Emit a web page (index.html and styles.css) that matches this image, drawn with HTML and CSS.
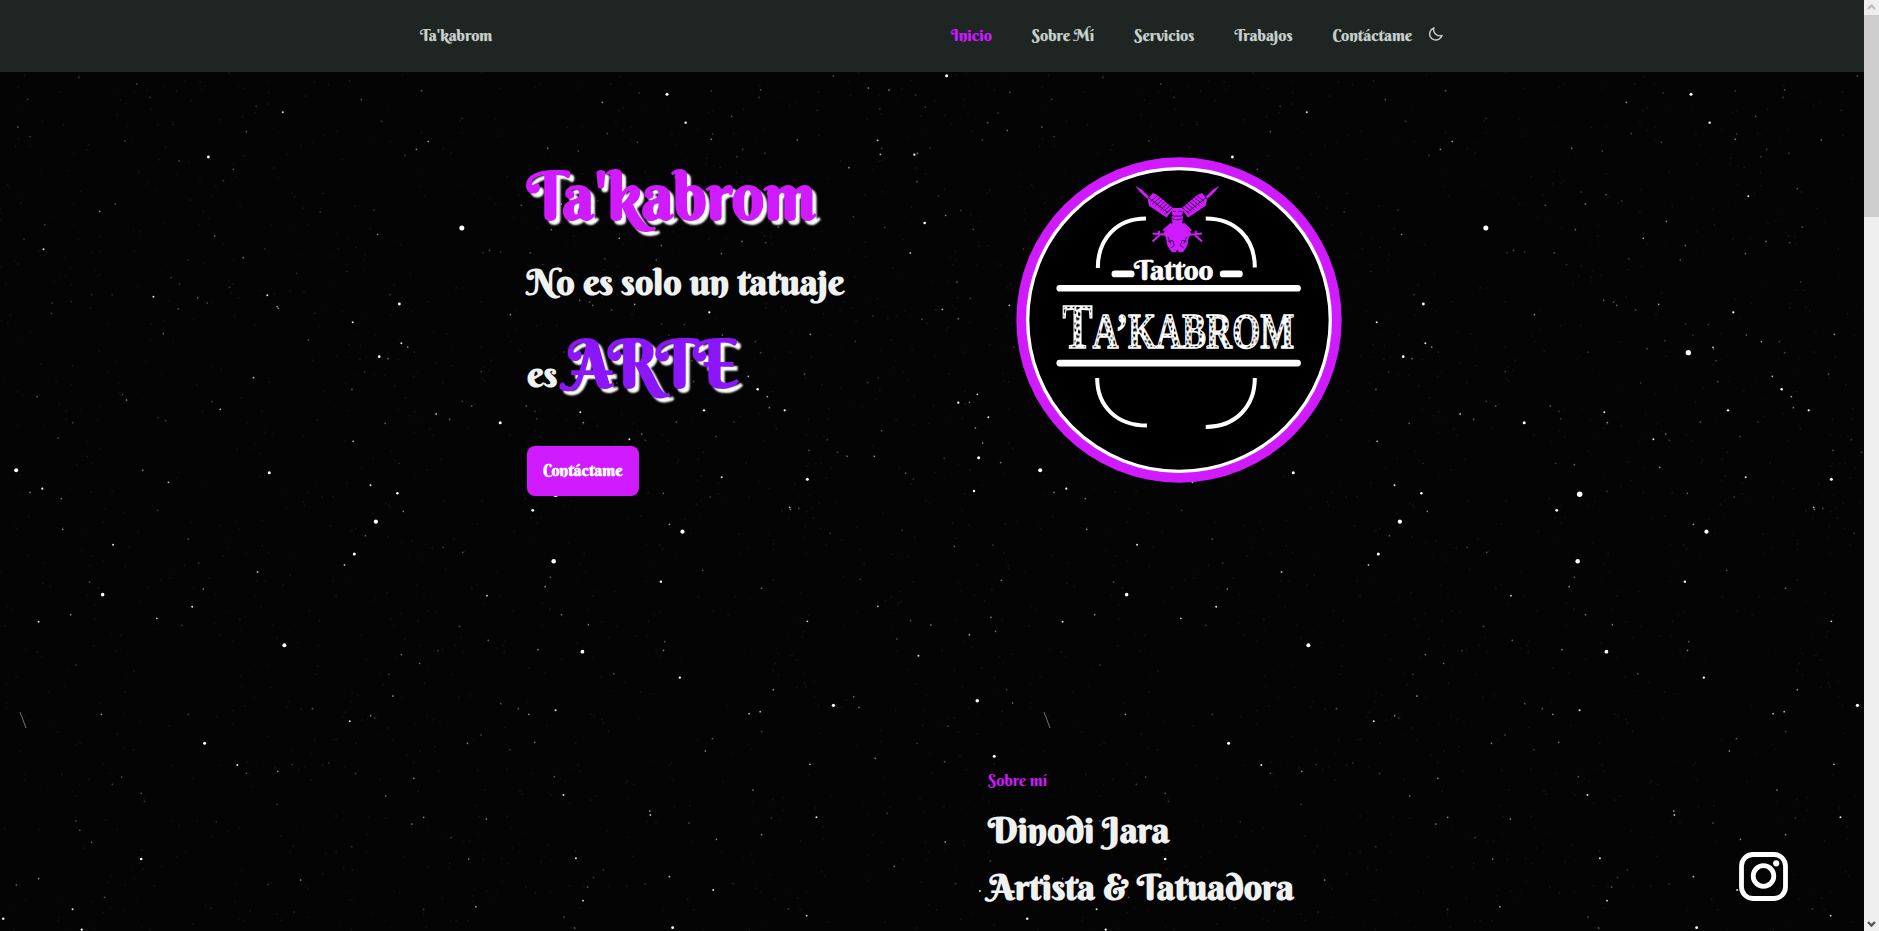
FILE: index.html
```html
<!DOCTYPE html>
<html lang="es">
<head>
<meta charset="utf-8">
<title>Ta'kabrom</title>
<link rel="stylesheet" href="styles.css">
</head>
<body>
<div class="page">
  <svg class="sky" width="1864" height="931" aria-hidden="true">
    <defs><pattern id="stars" width="1024" height="931" patternUnits="userSpaceOnUse"></pattern></defs>
    <rect width="1864" height="931" fill="url(#stars)"/>
  </svg>
  <header class="header">
    <a class="brand">Ta'kabrom</a>
    <nav class="nav">
      <a class="nav-item active">Inicio</a>
      <a class="nav-item">Sobre Mí</a>
      <a class="nav-item">Servicios</a>
      <a class="nav-item">Trabajos</a>
      <a class="nav-item">Contáctame</a>
    </nav>
    <svg class="moon" viewBox="0 0 14 14"><path d="M5 .8C3.3 4.8 7.4 10.2 13.1 8.5C11.8 12 8.1 13.9 4.7 12.7C1.3 11.5-.2 7.9 1.2 4.5C1.9 2.7 3.3 1.4 5 .8Z"/></svg>
  </header>
  <main>
    <section class="hero">
      <div class="hero-text">
        <h1 class="title">Ta'kabrom</h1>
        <p class="subtitle">No es solo un tatuaje</p>
        <p class="art-line"><span class="es">es</span><span class="art">ARTE</span></p>
        <a class="button">Contáctame</a>
      </div>
      <svg class="logo" viewBox="47 37 976 976">
        <defs>
          <pattern id="ink" width="61" height="53" patternUnits="userSpaceOnUse">
            <rect width="61" height="53" fill="#fff"/>
            <path d="M2 4l7-2 2 5-4 6-5-4zM17 1l4 4 5-1-1 8-4 2-6-6zM7 17l7-2 2 5-3 9-6-3zM23 18l5 1-2 7-4-1zM3 32l5 2 1 6-6 1zM15 35l7-3 4 4-4 8-5-2zM33 3l9-1 1 4-5 5 1 5-5-3zM48 6l7 3-2 6-4-1-3 5-2-8zM32 22l7-3 6 5-2 6-6-2-5 3zM50 24l6 2 2 8-6 3-3-5zM33 37l5 2-1 8-6-4zM44 38l6 4 4-1-1 7-8 1zM8 46l5-1 4 4-5 3zM24 49l5-2 3 4-6 1z" fill="#000"/>
          </pattern>
        </defs>
        <circle cx="535" cy="525" r="487" fill="#d01aff"/>
        <circle cx="535" cy="525" r="453" fill="#000" stroke="#fff" stroke-width="10"/>
        <g fill="none" stroke="#fff" stroke-width="12">
          <path d="M292 369C292 280 350 221 436 221M615 221C704 221 762 280 762 368M290 699C290 785 350 841 439 841M762 699C762 785 704 845 615 845"/>
        </g>
        <g stroke="#fff" stroke-width="20" stroke-linecap="round">
          <path d="M343 387H392M667 387H716M178 430H890M178 654H890"/>
        </g>
        <g fill="#d01aff">
          <path d="M404 123l20 12 21 21-5 6-22-20zM656 123l-20 12-21 21 5 6 22-20z"/>
          <path d="M441 164l15-19 15 6 47 40-20 27-53-35zM619 164l-15-19-15 6-47 40 20 27 53-35z"/>
          <path d="M510 190h40l-5 18 3 14-4 12 20 20 8 12-8 12-4 24-12 19-12 2-6-8-6 8-12-2-12-19-4-24-8-12 8-12 20-20-4-12 3-14z"/>
          <g fill="none" stroke="#d01aff" stroke-width="6"><path d="M512 236l-24 22M548 236l24 22M494 270l-38-4M475 258v18M476 271l-20 19M566 270l38-4M585 258v18M584 271l20 19"/></g>
          <g fill="none" stroke="#000" stroke-width="2"><path d="M450 170l22-18M455 178l24-20M464 184l22-20M472 189l22-19M480 195l22-20M487 201l23-20M494 207l21-18M610 170l-22-18M605 178l-24-20M596 184l-22-20M588 189l-22-19M580 195l-22-20M573 201l-23-20M566 207l-21-18M445 160l56 43M615 160l-56 43M507 210l13 4h20l13-4M508 220l18 5h8l18-5M502 290l14-3 5 15-10 7M558 290l-14-3-5 15 10 7M516 200h10M534 200h10M510 296l-8-20M550 296l8-20"/></g>
        </g>
        <text x="400" y="405" textLength="238" lengthAdjust="spacingAndGlyphs" class="logo-tattoo">Tattoo</text>
        <text x="186" y="610" textLength="694" lengthAdjust="spacingAndGlyphs" class="logo-name"><tspan class="logo-cap">T</tspan>A’KABROM</text>
      </svg>
    </section>
    <section class="about">
      <p class="about-label">Sobre mí</p>
      <h2 class="about-title">Dinodi Jara</h2>
      <h2 class="about-title">Artista &amp; Tatuadora</h2>
    </section>
  </main>
  <a class="instagram">
    <svg viewBox="0 0 49 49"><rect x="2.5" y="2.5" width="44" height="44" rx="11.5"/><circle cx="24.5" cy="24" r="10.3"/><circle class="dot" cx="37.2" cy="11.3" r="3.1"/></svg>
  </a>
</div>
<aside class="scrollbar">
  <svg class="arrow up" viewBox="0 0 15 15"><path d="M4 9l3.5-3.5L11 9"/></svg>
  <div class="thumb"></div>
  <svg class="arrow down" viewBox="0 0 15 15"><path d="M4 6l3.5 3.5L11 6"/></svg>
</aside>
<script src="stars.js"></script>
</body>
</html>
```

FILE: styles.css
```css
* { box-sizing: border-box; margin: 0; padding: 0; }

body {
  display: flex;
  height: 931px;
  overflow: hidden;
  background: #040404;
  color: #f0f2f1;
  font-family: "Berkshire Swash", "Liberation Serif", serif;
  font-weight: 700;
}

.page { position: relative; width: 1864px; height: 931px; overflow: hidden; }
.sky { position: absolute; inset: 0; z-index: -1; }

.header {
  display: flex;
  align-items: center;
  height: 72px;
  padding: 0 0 3px 420px;
  background: #1e2522;
  color: #c9d1ce;
  font-size: 16px;
  font-weight: 400;
  -webkit-text-stroke: .25px;
}
.brand { width: 531px; }
.nav { display: flex; gap: 40px; }
.active { color: #d01aff; }
.moon { width: 14px; height: 14px; margin: 0 0 1px 17px; fill: none; stroke: #c9d1ce; stroke-width: 1.4; stroke-linejoin: round; }

.hero { display: flex; align-items: flex-start; height: 696px; padding: 84px 0 0 527px; }
.hero-text { width: 489px; }
.title { height: 80px; font-size: 64px; line-height: 80px; color: #d01aff; text-shadow: 4px 4px 2px #fff; }
.subtitle { margin-top: 16px; height: 60px; font-size: 36px; line-height: 60px; }
.art-line { display: flex; align-items: baseline; margin-top: 12px; height: 80px; }
.es { width: 38.5px; font-size: 36px; line-height: 60px; }
.art { font-size: 64px; line-height: 80px; color: #8b16fa; text-shadow: 4px 4px 2px #fff; }
.button {
  display: block;
  width: 112px;
  height: 50px;
  margin-top: 42px;
  padding-left: 16px;
  border-radius: 8px;
  background: #d01aff;
  color: #fff;
  font-size: 16px;
  line-height: 49px;
}

.logo { width: 326px; height: 326px; margin-top: 1px; }
.logo-tattoo { font-size: 84px; font-weight: 400; fill: #fff; stroke: #fff; stroke-width: 2px; }
.logo-name { font-family: "Liberation Serif", serif; font-size: 150px; fill: url(#ink); stroke: #fff; stroke-width: 4px; }
.logo-cap { font-size: 188px; }

.about { padding-left: 988px; }
.about-label { height: 24px; margin-bottom: 10px; color: #d01aff; font-size: 16px; font-weight: 400; line-height: 24px; }
.about-title { height: 57px; font-size: 36px; line-height: 57px; }

.instagram { position: absolute; right: 76px; bottom: 30px; width: 49px; height: 49px; }
.instagram svg { display: block; fill: none; stroke: #fff; stroke-width: 4.8; }
.instagram .dot { fill: #fff; stroke: none; }

.scrollbar { display: flex; flex-direction: column; width: 15px; height: 931px; background: #efefef; }
.arrow { width: 15px; height: 15px; fill: none; stroke-width: 2.4; }
.up { stroke: #bdbdbd; }
.down { margin-top: auto; stroke: #555; }
.thumb { height: 202px; background: #cdcdcd; }
```

FILE: stars.js
```js
// Star charts: each plate has an origin, a scale, and [x, y, size] entries in plate units.
const plates = [
  { x: 0, y: 70, sx: 2.529, sy: 3, stars: [
    [199,22,1],[346,42,1.2],[70,88,1],[379,82,1],[45,171,1.3],[76,200,1],[316,213,1.2],[648,109,1],[715,127,2],[623,185,1.2],[527,261,2.8],[453,273,1.2],[590,298,1.2],[565,332,1],[292,402,1.2],[252,424,1.6],[113,464,1],[61,507,1],[110,538,2],[543,498,1.4],[615,563,1.4],[670,536,.8],[476,570,.8],[432,623,1],[454,642,1],[580,652,1],[388,680,2],[500,684,1.4],[524,699,1.2],[451,717,1.2],[232,674,.8],[284,674,.8],[132,699,1],[180,695,.8],[130,730,1],[676,676,2],[701,710,1.6],[704,715,1.5],[797,730,.8],[892,757,2],[780,810,1.2],[413,791,1.3],[184,887,.7],[641,923,1.8],[94,980,1.2],[320,990,1.6],[310,974,1],[557,1018,1.8],[536,995,1],[184,1058,1],[400,1043,.8],[419,1052,1],[147,1104,1.2],[41,1201,4],[107,1256,2.2],[76,1267,1.5],[155,1286,1.4],[361,1201,1.5],[426,1237,1.8],[681,1208,3],[893,1114,1.8],[914,89,1.2],[884,33,.8],[965,154,1],[1066,62,1.2],[1168,145,1],[1083,214,1.6],[1053,238,1.5],[1024,256,1],[955,493,1.5],[946,420,1],[810,426,1],[1168,474,5],[1238,541,1.2],[1266,546,1],[1222,548,.8],[986,674,1],[1010,702,2.8],[1015,820,2],[1031,831,1.6],[959,860,2.6],[981,866,1.3],[922,906,1],[890,958,1.3],[1048,846,.8],[1291,734,1.5],[1217,905,1],[1103,1032,1.8],[1137,1048,1.3],[1169,994,1],[1193,1008,1.3],[974,1060,1.3],[1265,1058,3],[937,1246,2],[1005,1270,2.5],[1009,1180,.8],[745,380,.7],[817,370,.7],[750,610,.8],[877,604,.8]
  ] },
  { x: 516, y: 70, sx: 3, sy: 3, stars: [
    [259,97,1.6],[369,69,1],[453,73,3],[586,63,1],[734,60,1.3],[729,82,1],[647,139,1.2],[509,158,2.4],[590,192,1],[586,208,1.5],[680,238,1],[663,260,1],[747,250,1],[844,210,1.4],[95,235,1.4],[187,243,1.2],[274,191,1.1],[364,217,1.1],[952,18,1.2],[904,121,.8],[16,406,1.2],[124,366,1],[136,402,1.5],[198,374,1.2],[245,393,1],[106,479,1.3],[379,454,1.5],[310,505,1.7],[436,527,1.3],[421,570,1.3],[43,549,1.2],[267,566,1],[80,584,.9],[625,379,2],[772,356,1.2],[787,471,1.2],[678,514,1.4],[749,518,1.1],[616,551,1.3],[782,636,1],[580,727,2.2],[356,703,1.7],[230,706,1.3],[221,696,1.2],[191,691,1.3],[287,720,1.2],[505,764,1],[437,762,1],[459,795,1],[375,812,1],[321,836,1.1],[144,846,1],[445,848,5.3],[519,832,1.9],[521,837,1.2],[528,872,1],[619,795,1.3],[664,815,1.6],[718,815,1],[734,848,1.1],[883,793,1.6],[866,912,1.3],[697,919,1.8],[725,958,2.5],[754,980,1.7],[760,1013,1.5],[806,1021,2.2],[564,1021,2.4],[481,1056,1.3],[533,935,1.1],[302,939,1],[31,1008,1.3],[57,1024,1],[62,1046,1],[193,1027,2],[202,1058,1.5],[340,1108,2],[377,1092,1.4],[388,1111,1],[654,1056,1],[600,1099,1.1],[934,1109,1],[879,1141,1.2],[964,1147,1],[359,1192,1.6],[103,1184,1.3],[47,1180,1],[617,1222,2],[874,1228,3],[119,1273,5.5],[442,1270,1.3],[201,1264,1],[583,1281,1]
  ] },
  { x: 840, y: 70, sx: 3, sy: 3, stars: [
    [320,17,3],[85,54,1.6],[147,60,1.6],[227,75,1],[256,111,1.1],[119,117,1],[443,158,1.2],[502,181,1.4],[510,67,1.1],[474,129,1],[427,210,1.1],[113,211,1.9],[121,253,1.8],[27,293,1.6],[125,235,1],[223,254,2.2],[232,250,1.5],[270,234,1],[231,335,1.2],[295,378,1],[363,421,1],[317,436,1.5],[254,459,2.6],[400,478,1.2],[134,472,1],[211,549,1.8],[40,440,1],[351,636,1.3],[550,537,1],[391,685,1],[307,718,1.8],[355,746,1.4],[246,748,1.2],[508,706,1.8],[522,831,1],[99,738,1],[46,814,1],[115,924,1],[83,938,1],[412,973,1.9],[355,998,2.3],[388,997,1.4],[445,1042,2],[406,1074,1.6],[428,1119,1.6],[416,1163,3],[482,1178,1.4],[125,1082,1.2],[22,1159,1.3],[103,1159,1.6],[197,1210,1.3],[220,1227,1],[313,1165,1],[402,1263,2.4]
  ] },
  { x: 0, y: 500, sx: 1.5298, sy: 3, stars: [
    [575,65,4.3],[815,31,2.8],[617,34,1.5],[241,31,1],[1208,22,1.8],[1209,28,1.4],[1222,25,1.2],[96,88,1.6],[173,134,2],[288,117,1.2],[559,107,1.3],[542,162,3],[527,195,1.8],[394,216,1.8],[304,189,1],[708,157,1.2],[678,142,1],[1044,95,4.2],[1024,73,1.6],[847,184,4.5],[842,232,1.3],[834,260,1.5],[1011,245,2.4],[1075,211,1.2],[745,287,1.9],[137,246,1.2],[311,267,1.5],[157,284,3.6],[294,320,2],[108,344,1.6],[59,365,2],[240,355,1.9],[278,376,1],[859,344,1.4],[900,374,1.4],[703,379,1.2],[435,436,4],[614,464,1.4],[642,490,1.3],[670,452,1],[747,421,1.3],[823,449,1.5],[891,455,3.8],[1017,425,1.2],[1015,451,1.5],[1040,533,2.3],[1165,265,1.4],[1235,364,1.9],[1343,319,1.8],[1424,375,1.5],[1483,404,1.7],[1523,394,1.4],[1516,352,1.5],[1393,362,1.2],[1372,417,1.2],[1405,467,2],[1460,139,1.3],[1316,238,1],[1532,241,1.5],[1270,100,1],[1380,91,1],[1519,135,1],[116,495,1],[601,588,1.7],[595,523,1],[850,631,2],[809,643,1.6],[793,626,1.2],[766,611,1.2],[567,647,1.5],[535,664,2],[573,654,1],[478,626,1.2],[155,643,1.6],[288,643,1],[939,521,1.2],[1183,569,1.6],[1163,635,1.8],[1146,641,1.8],[1275,616,3.2],[1314,622,1.4],[1306,590,1.3],[1495,602,3.5],[1549,609,1.4],[1540,569,1],[1450,678,1.2],[313,730,3],[363,795,2],[377,820,1.2],[425,814,1.6],[447,794,1],[544,821,1],[503,789,1],[715,730,1.5],[736,705,1.2],[818,727,1.4],[780,749,1],[633,835,1.5],[848,830,1.2],[1079,753,1.6],[1090,716,1.2],[1165,695,1],[1239,793,1.8],[1339,775,1.5],[1403,730,1],[1445,785,1.2],[1521,769,3],[862,885,2],[1152,870,1.5],[590,888,1.4],[424,913,1],[216,880,1.2],[221,904,1],[186,831,1.2],[172,853,1],[116,963,1.2],[122,991,1.2],[648,952,1.5],[630,972,1.5],[744,957,1.6],[994,933,1.7],[995,945,1.8],[1054,969,1.2],[1096,1018,1.5],[1165,1004,1.5],[1249,952,2],[1180,954,1],[1446,1026,1.7],[1357,940,1],[140,1027,1.3],[216,1077,2.6],[59,1136,1.6],[25,1155,1.4],[5,1256,2.4],[111,1228,2],[160,1192,1.2],[125,1289,2.3],[460,1140,1.6],[410,1153,1],[717,1077,1.5],[881,1075,2],[923,1110,1],[908,1132,1],[899,1161,1.3],[892,1202,1.9],[728,1220,1.7],[863,1251,1.2],[1024,1130,1.8],[1091,1170,2],[1029,1283,2.8],[1234,1247,1.9],[1368,1099,1.4],[1206,1227,1.1],[1515,1083,1.2],[1499,1173,2],[1462,1151,1],[879,1284,1.4],[648,1228,1],[450,1236,.8],[323,1225,.8],[987,1152,1],[690,1013,1],[538,1040,.9],[331,965,.8]
  ] }
];

const pattern = document.getElementById('stars');
const add = (name, attrs) => {
  const el = document.createElementNS('http://www.w3.org/2000/svg', name);
  for (const key in attrs) el.setAttribute(key, attrs[key]);
  pattern.appendChild(el);
};

// Faint dust, seeded so that it is the same on every load.
let seed = 17;
const random = () => (seed = (seed * 16807) % 2147483647) / 2147483647;
for (let i = 0; i < 1500; i++) {
  add('circle', { cx: random() * 1024, cy: random() * 931, r: 0.9, fill: '#fff', opacity: 0.02 + random() * 0.05 });
}

for (const plate of plates) {
  for (const [x, y, size] of plate.stars) {
    const radius = Math.max(0.85, size / 2);
    add('circle', {
      cx: plate.x + x / plate.sx,
      cy: plate.y + y / plate.sy,
      r: radius,
      fill: '#fff',
      opacity: Math.min(1, size * size * 0.22)
    });
  }
}

// Meteor trail
add('path', { d: 'M20 712L26 728', stroke: '#fff', 'stroke-width': 0.8, opacity: 0.55 });
```
